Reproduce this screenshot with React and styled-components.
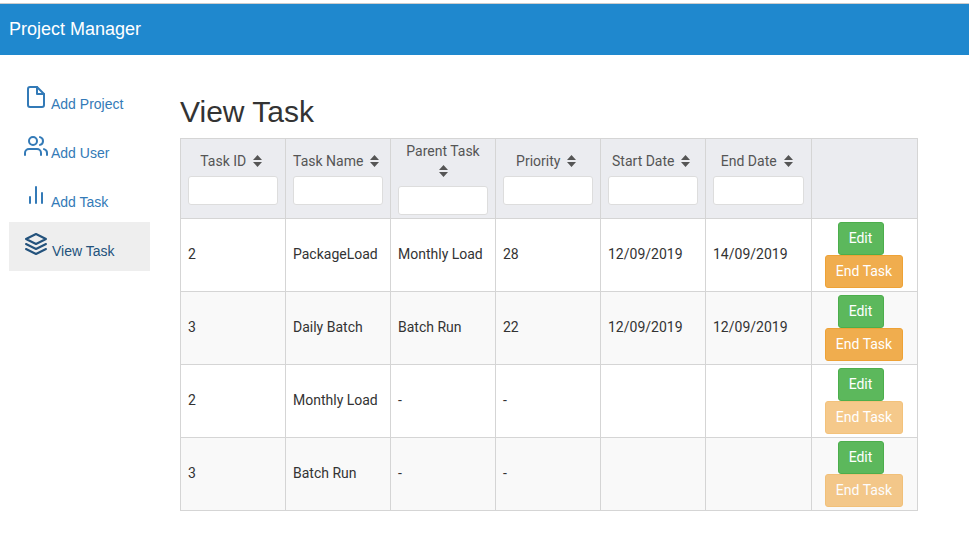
import React from "react";
import styled, { createGlobalStyle } from "styled-components";
import { FiFile, FiUsers, FiBarChart2, FiLayers } from "react-icons/fi";

const Global = createGlobalStyle`
  html, body { margin: 0; padding: 0; background: #fff; }
  * { box-sizing: border-box; }
  body { font-family: "Liberation Sans", Arial, sans-serif; font-size: 14px; color: #333; }
`;
const Page = styled.div`width: 969px; height: 536px; overflow: hidden; padding-top: 3px;`;
const TopLine = styled.div`height: 1px; background: #ccc;`;
const Bar = styled.header`
  height: 51px; background: #1f88ce; color: #fff; display: flex; align-items: center;
  padding: 0 9px 1px; font-size: 18px;
`;
const Body = styled.div`display: flex; align-items: flex-start;`;
const Side = styled.nav`width: 141px; margin: 20px 0 0 9px; display: flex; flex-direction: column; flex: none;`;
const Item = styled.a`
  height: 49px; display: flex; align-items: flex-end; padding: 0 0 10px 15px;
  color: ${p => (p.$active ? "#23527c" : "#337ab7")};
  background: ${p => (p.$active ? "#eee" : "transparent")};
  font-size: 14px; line-height: 20px;
  svg { font-size: 24px; flex: none; margin: 0 ${p => (p.$active ? 4 : 3)}px 5px 0; }
`;
const Main = styled.main`margin-left: 30px; width: 738px;`;
const Title = styled.h1`font-size: 30px; font-weight: 400; line-height: 33px; margin: 40px 0 10px; color: #333;`;
const Table = styled.table`
  width: 737px; table-layout: fixed; border-collapse: collapse;
  font-family: Roboto, sans-serif; font-size: 14px; color: #333;
`;
const Th = styled.th`
  width: ${p => p.$w}px; height: 80px; padding: 2px 7px 3px; background: #ebecf0; border: 1px solid #d5d5d5;
  font-weight: 400; color: #555; text-align: center; vertical-align: middle; line-height: 20px;
`;
const Sort = styled.svg`width: 9px; height: 12px; margin: 0 3.5px; vertical-align: -1px; fill: #555;`;
const Filter = styled.input`
  display: block; width: 100%; height: 29px; margin-top: 5px; background: #fff;
  border: 1px solid #ddd; border-radius: 3px;
`;
const Row = styled.tr`background: ${p => (p.$odd ? "#f9f9f9" : "#fff")};`;
const Td = styled.td`height: 73px; padding: 0 7px 3px; border: 1px solid #d5d5d5; vertical-align: middle;`;
const Actions = styled.td`height: 73px; padding: 0; border: 1px solid #d5d5d5; vertical-align: middle;`;
const Stack = styled.div`display: flex; flex-direction: column; align-items: center;`;
const Btn = styled.button`
  height: 33px; padding: 0 0 1px; border-radius: 3px; color: #fff; font: 14px Roboto, sans-serif;
  border: 1px solid ${p => p.$border}; background: ${p => p.$bg}; opacity: ${p => (p.$off ? 0.65 : 1)};
`;
const EditBtn = styled(Btn)`width: 46px; margin-right: 8px;`;
const EndBtn = styled(Btn)`width: 78px; margin-right: 1px;`;

const cols = [
  ["Task ID", 105], ["Task Name", 105], ["Parent Task", 105], ["Priority", 105],
  ["Start Date", 105], ["End Date", 106],
];
const rows = [
  ["2", "PackageLoad", "Monthly Load", "28", "12/09/2019", "14/09/2019", false],
  ["3", "Daily Batch", "Batch Run", "22", "12/09/2019", "12/09/2019", false],
  ["2", "Monthly Load", "-", "-", "", "", true],
  ["3", "Batch Run", "-", "-", "", "", true],
];
const SortIcon = () => (
  <Sort viewBox="0 0 9 12"><path d="M4.5 0L9 5H0zM4.5 12L0 7h9z" /></Sort>
);

export default function App() {
  return (
    <Page>
      <Global />
      <TopLine />
      <Bar>Project Manager</Bar>
      <Body>
        <Side>
          <Item><FiFile />Add Project</Item>
          <Item><FiUsers />Add User</Item>
          <Item><FiBarChart2 />Add Task</Item>
          <Item $active><FiLayers />View Task</Item>
        </Side>
        <Main>
          <Title>View Task</Title>
          <Table>
            <thead>
              <tr>
                {cols.map(([c, w]) => (
                  <Th key={c} $w={w}>{c} <SortIcon /><Filter /></Th>
                ))}
                <Th $w={106} />
              </tr>
            </thead>
            <tbody>
              {rows.map((r, i) => (
                <Row key={i} $odd={i % 2 === 1}>
                  {r.slice(0, 6).map((v, j) => <Td key={j}>{v}</Td>)}
                  <Actions>
                    <Stack>
                      <EditBtn $bg="#5cb85c" $border="#4cae4c">Edit</EditBtn>
                      <EndBtn $bg="#f0ad4e" $border="#eea236" $off={r[6]}>End Task</EndBtn>
                    </Stack>
                  </Actions>
                </Row>
              ))}
            </tbody>
          </Table>
        </Main>
      </Body>
    </Page>
  );
}
